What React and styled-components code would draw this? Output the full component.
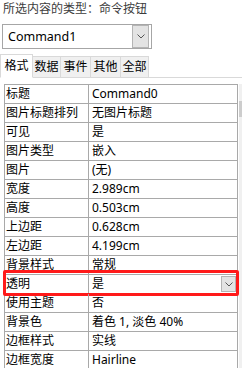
import React from "react";
import styled, { createGlobalStyle } from "styled-components";

const Global = createGlobalStyle`
  html, body { margin: 0; padding: 0; background: #fff; }
  body { font-family: "Noto Sans", "Noto Sans CJK SC", sans-serif; }
`;

const Sheet = styled.div`
  width: 242px;
  height: 368px;
  overflow: hidden;
  background: #fff;
  display: flex;
  flex-direction: column;
`;

const Caption = styled.div`
  height: 18px;
  padding-left: 3px;
  font-size: 12px;
  line-height: 17px;
  color: #3c3c3c;
  white-space: nowrap;
`;

const Combo = styled.div`
  margin: 7px 0 0 2px;
  width: 150px;
  height: 27px;
  box-sizing: border-box;
  border: 1px solid #a6a6a6;
  display: flex;
  align-items: center;
  justify-content: space-between;
  background: #fff;
`;

const ComboText = styled.span`
  padding-left: 5px;
  font-size: 12.5px;
  color: #000;
`;

const DropButton = styled.div`
  width: ${(p) => p.$w}px;
  height: ${(p) => p.$h}px;
  margin-right: ${(p) => p.$mr}px;
  box-sizing: border-box;
  border: 1px solid #b4b4b4;
  background: #e3e3e3;
  display: flex;
  align-items: center;
  justify-content: center;
`;

const Chevron = () => (
  <svg width="8" height="5" viewBox="0 0 8 5">
    <polyline points="0.5,0.5 4,4 7.5,0.5" fill="none" stroke="#555" strokeWidth="1" />
  </svg>
);

const TabBar = styled.div`
  margin-top: 5px;
  height: 24px;
  box-sizing: border-box;
  display: flex;
  align-items: flex-end;
  border-bottom: 1px solid #d9d9d9;
`;

const Tab = styled.div`
  box-sizing: border-box;
  width: ${(p) => p.$w}px;
  height: ${(p) => (p.$active ? 24 : 21)}px;
  margin-bottom: ${(p) => (p.$active ? -1 : 0)}px;
  border: 1px solid #d9d9d9;
  border-bottom: ${(p) => (p.$active ? "1px solid #fff" : "none")};
  border-left: ${(p) => (p.$first ? "1px solid #d9d9d9" : "none")};
  background: ${(p) => (p.$active ? "#fff" : "#f0f0f0")};
  font-size: 12px;
  line-height: ${(p) => (p.$active ? 22 : 19)}px;
  text-align: center;
  color: #000;
`;

const Body = styled.div`
  margin-top: 6px;
  display: flex;
  align-items: flex-start;
`;

const Grid = styled.div`
  margin-left: 4px;
  width: 234px;
  flex: none;
  box-sizing: border-box;
  border: 1px solid #a9a9a9;
  border-bottom: none;
`;

const Row = styled.div`
  position: relative;
  display: grid;
  grid-template-columns: 84px 1fr;
  height: 19px;
  box-sizing: border-box;
  border-bottom: 1px solid #a9a9a9;
  font-size: 12px;
  line-height: 18px;
  color: #000;
`;

const Label = styled.div`
  padding-left: 1px;
  border-right: 1px solid #a9a9a9;
  white-space: nowrap;
  overflow: hidden;
`;

const Value = styled.div`
  padding-left: 3px;
  display: flex;
  align-items: center;
  justify-content: space-between;
  white-space: nowrap;
`;

const Highlight = styled.div`
  position: absolute;
  left: -2px;
  right: -2px;
  top: -5px;
  bottom: -3px;
  border: 3px solid #ff1a1a;
  border-radius: 2px;
  pointer-events: none;
`;

const Scroll = styled.div`
  margin-left: 1px;
  width: 17px;
  height: 290px;
  flex: none;
  background: #f0f0f0;
  display: flex;
  flex-direction: column;
`;

const ScrollArrow = styled.div`
  height: 17px;
  background: #f0f0f0;
`;

const Thumb = styled.div`
  height: 16px;
  background: #cdcdcd;
`;

const rows = [
  ["标题", "Command0"],
  ["图片标题排列", "无图片标题"],
  ["可见", "是"],
  ["图片类型", "嵌入"],
  ["图片", "(无)"],
  ["宽度", "2.989cm"],
  ["高度", "0.503cm"],
  ["上边距", "0.628cm"],
  ["左边距", "4.199cm"],
  ["背景样式", "常规"],
  ["透明", "是", true],
  ["使用主题", "否"],
  ["背景色", "着色 1, 淡色 40%"],
  ["边框样式", "实线"],
  ["边框宽度", "Hairline"],
];

const tabs = [
  ["格式", 33],
  ["数据", 28],
  ["事件", 30],
  ["其他", 30],
  ["全部", 28],
];

export default function App() {
  return (
    <>
      <Global />
      <Sheet>
        <Caption>所选内容的类型：命令按钮</Caption>
        <Combo>
          <ComboText>Command1</ComboText>
          <DropButton $w={17} $h={23} $mr={2}>
            <Chevron />
          </DropButton>
        </Combo>
        <TabBar>
          {tabs.map(([t, w], i) => (
            <Tab key={t} $w={w} $active={i === 0} $first={i === 0}>
              {t}
            </Tab>
          ))}
        </TabBar>
        <Body>
          <Grid>
            {rows.map(([k, v, sel]) => (
              <Row key={k}>
                <Label>{k}</Label>
                <Value>
                  <span>{v}</span>
                  {sel && (
                    <DropButton $w={15} $h={16} $mr={1}>
                      <Chevron />
                    </DropButton>
                  )}
                </Value>
                {sel && <Highlight />}
              </Row>
            ))}
          </Grid>
          <Scroll>
            <ScrollArrow />
            <Thumb />
          </Scroll>
        </Body>
      </Sheet>
    </>
  );
}
